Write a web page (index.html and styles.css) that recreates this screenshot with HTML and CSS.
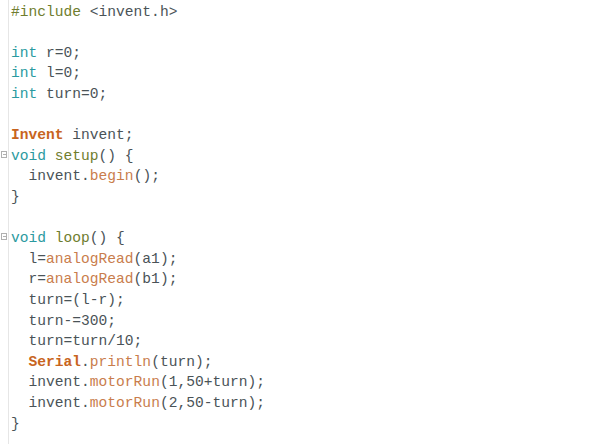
FILE: index.html
```html
<!DOCTYPE html>
<html>
<head>
<meta charset="utf-8">
<link rel="stylesheet" href="styles.css">
</head>
<body>
<div class="editor">
  <div class="gutter">
    <div class="gl"></div><div class="gl"></div><div class="gl"></div><div class="gl"></div><div class="gl"></div>
    <div class="gl"></div><div class="gl"></div>
    <div class="gl"><span class="fold"></span></div>
    <div class="gl"></div><div class="gl"></div><div class="gl"></div>
    <div class="gl"><span class="fold"></span></div>
    <div class="gl"></div><div class="gl"></div><div class="gl"></div><div class="gl"></div><div class="gl"></div>
    <div class="gl"></div><div class="gl"></div><div class="gl"></div>
  </div>
  <pre class="code"><span class="pp">#include</span> &lt;invent.h&gt;

<span class="ty">int</span> r=0;
<span class="ty">int</span> l=0;
<span class="ty">int</span> turn=0;

<span class="cls">Invent</span> invent;
<span class="ty">void</span> <span class="pp">setup</span>() {
  invent.<span class="fn">begin</span>();
}

<span class="ty">void</span> <span class="pp">loop</span>() {
  l=<span class="fn">analogRead</span>(a1);
  r=<span class="fn">analogRead</span>(b1);
  turn=(l-r);
  turn-=300;
  turn=turn/10;
  <span class="cls">Serial</span>.<span class="fn">println</span>(turn);
  invent.<span class="fn">motorRun</span>(1,50+turn);
  invent.<span class="fn">motorRun</span>(2,50-turn);
}</pre>
</div>
</body>
</html>
```
FILE: styles.css
```css
html, body {
  margin: 0;
  padding: 0;
  background: #ffffff;
}
.editor {
  display: flex;
  width: 592px;
  height: 444px;
  overflow: hidden;
}
.gutter {
  width: 8px;
  border-right: 1px solid #e6e6e6;
  padding-top: 1.7px;
  flex: none;
}
.gl {
  height: 20.6px;
  position: relative;
}
.fold {
  position: absolute;
  left: 1px;
  top: 5px;
  width: 4px;
  height: 5px;
  border: 1px solid #b0b0b0;
  background: linear-gradient(#b0b0b0, #b0b0b0) center / 3px 1px no-repeat;
}
.code {
  margin: 0;
  padding: 1.7px 0 0 2px;
  font-family: "Liberation Mono", "DejaVu Sans Mono", monospace;
  font-size: 14.6px;
  line-height: 20.6px;
  color: #4a5357;
}
.pp { color: #6f7d2e; }
.ty { color: #2a9aa0; }
.cls { color: #c86420; font-weight: bold; }
.fn { color: #c97d4c; }
```
